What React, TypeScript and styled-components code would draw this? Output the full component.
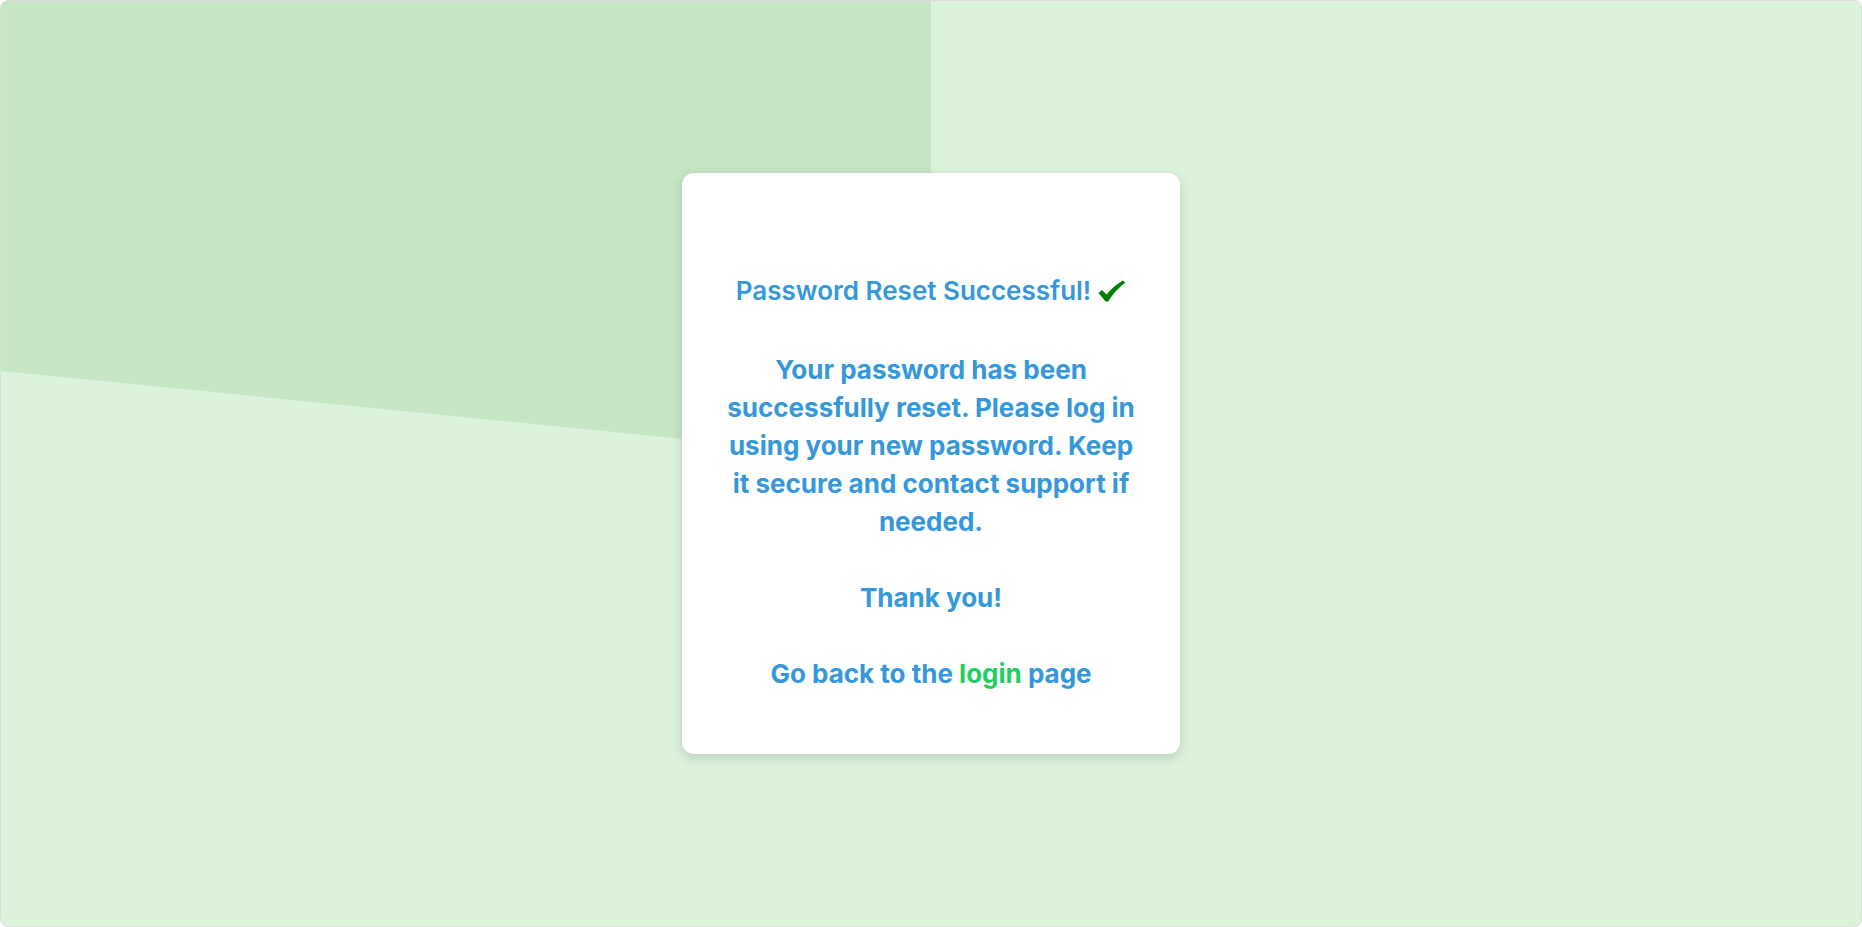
import styled, { createGlobalStyle } from 'styled-components'

const GlobalStyle = createGlobalStyle`
  html, body {
    margin: 0;
    padding: 0;
    background: #ffffff;
  }
  body {
    font-family: Inter, 'Noto Sans', sans-serif;
  }
`

const Page = styled.div`
  position: relative;
  box-sizing: border-box;
  height: 100vh;
  display: flex;
  align-items: center;
  justify-content: center;
  background: #dbf2db;
  border: 1px solid #dcdcdc;
  border-radius: 8px;
  overflow: hidden;
`

// darker slanted block in the top-left quarter, behind the card
const Backdrop = styled.div`
  position: absolute;
  top: 0;
  left: 0;
  width: 50%;
  height: 50%;
  background: #c5e5c5;
  clip-path: polygon(0 0, 100% 0, 100% 100%, 0 80%);
`

const Card = styled.div`
  position: relative;
  box-sizing: border-box;
  width: 498px;
  padding: 99px 41px 61px;
  background: #ffffff;
  border-radius: 12px;
  box-shadow: 0 4px 12px rgba(0, 0, 0, 0.15);
  text-align: center;
  color: #3498db;
`

const Title = styled.h2`
  margin: 0 0 41px;
  font-size: 26px;
  line-height: 38px;
  font-weight: 600;
`

const CheckIcon = styled.svg`
  display: inline-block;
  width: 28px;
  height: 22px;
  margin-left: 7px;
  vertical-align: -2px;
`

const Text = styled.p<{ $last?: boolean }>`
  margin: 0 0 ${(p) => (p.$last ? 0 : 38)}px;
  font-size: 26px;
  line-height: 38px;
  font-weight: 700;
`

const LoginLink = styled.a`
  color: #1fcf5f;
  text-decoration: none;
`

const Check = () => (
  <CheckIcon viewBox="0 0 28 22" aria-label="success">
    <path
      d="M0.5 13 L4 10 L8.6 14.6 C13 9 18.5 4 25 0.5 L27.2 2.6 C20.5 8 14.5 14.5 10.2 21.5 L7.6 21.5 Z"
      fill="#008000"
    />
  </CheckIcon>
)

const App = () => {
  return (
    <>
      <GlobalStyle />
      <Page>
        <Backdrop />
        <Card>
          <Title>
            Password Reset Successful!
            <Check />
          </Title>
          <Text>
            Your password has been successfully reset. Please log in using your new password. Keep it
            secure and contact support if needed.
          </Text>
          <Text>Thank you!</Text>
          <Text $last>
            Go back to the <LoginLink href="#">login</LoginLink> page
          </Text>
        </Card>
      </Page>
    </>
  )
}

export default App
